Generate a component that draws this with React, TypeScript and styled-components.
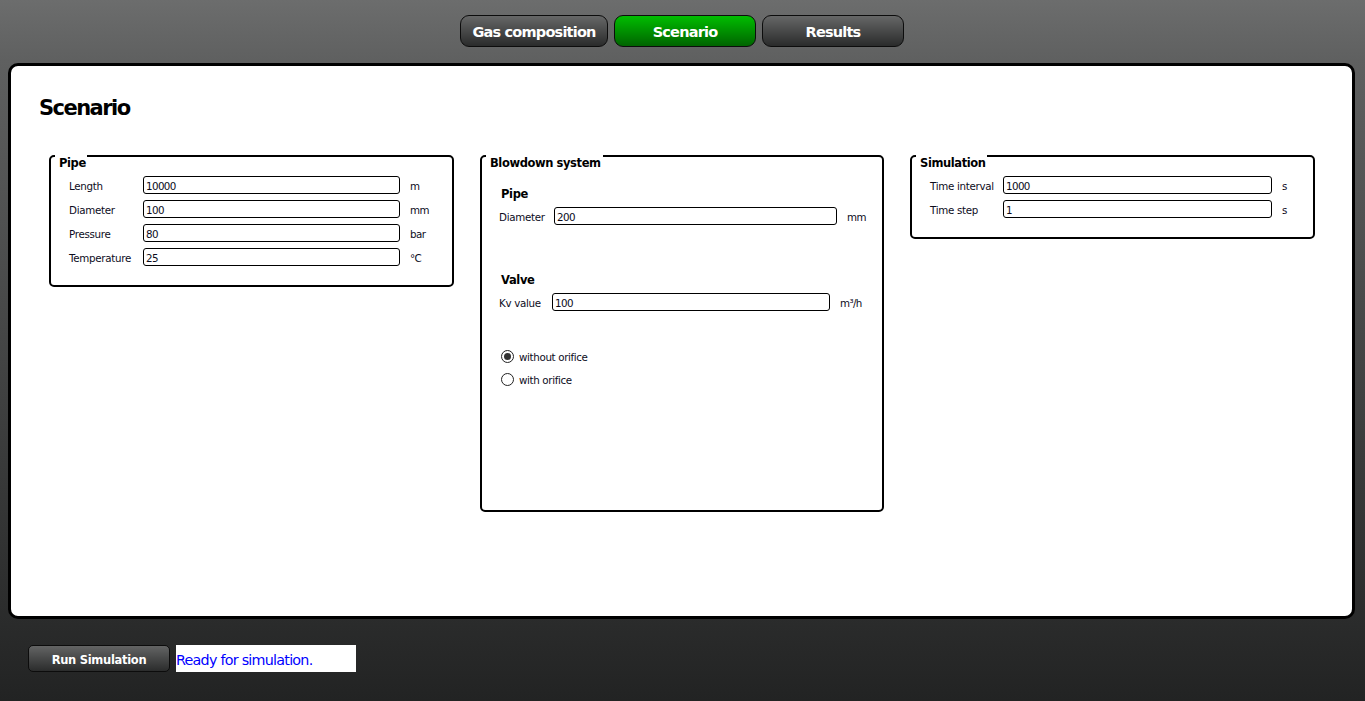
import React from "react";
import styled, { createGlobalStyle } from "styled-components";

const Global = createGlobalStyle`
  html, body {
    margin: 0;
    height: 100%;
    overflow: hidden;
  }
  body {
    font-family: "DejaVu Sans", "Liberation Sans", sans-serif;
    background: linear-gradient(#6c6d6d 0, #5f6060 60px, #2a2b2b 625px, #222323 100%);
  }
`;

const Page = styled.div`
  width: 1365px;
  height: 701px;
  display: flex;
  flex-direction: column;
`;

const TabBar = styled.nav`
  display: flex;
  justify-content: center;
  gap: 6px;
  padding: 15px 1px 16px 0;
`;

const Tab = styled.button<{ $active?: boolean; $w: number }>`
  width: ${(p) => p.$w}px;
  height: 32px;
  padding: 1px 0 0 0;
  border: 1px solid #0c0c0c;
  border-radius: 9px;
  color: #fff;
  font: bold 14.5px "DejaVu Sans", sans-serif;
  letter-spacing: -0.8px;
  background: ${(p) =>
    p.$active
      ? "linear-gradient(#00bd00, #006400)"
      : "linear-gradient(#666767, #2a2b2b)"};
`;

const Panel = styled.main`
  width: 1347px;
  height: 556px;
  box-sizing: border-box;
  margin-left: 8px;
  background: #fff;
  border: 3px solid #000;
  border-radius: 10px;
  padding: 29px 0 0 27px;
`;

const Heading = styled.h1`
  margin: 0 0 34px 1px;
  font-size: 21px;
  line-height: 26px;
  font-weight: bold;
  letter-spacing: -1.55px;
  color: #000;
`;

const Columns = styled.div`
  display: flex;
  align-items: flex-start;
  gap: 26px;
  margin-left: 11px;
`;

const Group = styled.section<{ $w?: number; $h: number }>`
  width: ${(p) => p.$w ?? 405}px;
  height: ${(p) => p.$h}px;
  box-sizing: border-box;
  border: 2px solid #000;
  border-radius: 5px;
  background: #fff;
`;

const Legend = styled.div<{ $w: number }>`
  width: ${(p) => p.$w}px;
  height: 19px;
  box-sizing: border-box;
  margin: -2px 0 0 4px;
  padding: 0 0 0 4px;
  background: #fff;
  font-size: 11.5px;
  line-height: 17px;
  font-weight: bold;
  letter-spacing: -0.4px;
  color: #000;
  position: relative;
`;

const Rows = styled.div`
  display: flex;
  flex-direction: column;
  gap: 6px;
  padding: 2px 0 0 18px;
`;

const Row = styled.div<{ $label: number; $input: number }>`
  display: grid;
  grid-template-columns: ${(p) => p.$label}px ${(p) => p.$input}px auto;
  align-items: center;
  height: 18px;
`;

const Label = styled.label`
  padding-top: 1px;
  font-size: 10.3px;
  letter-spacing: -0.3px;
  color: #0c0c1c;
  white-space: nowrap;
`;

const Field = styled.input`
  width: 100%;
  height: 18px;
  box-sizing: border-box;
  padding: 1px 2px 0 2px;
  border: 1px solid #000;
  border-radius: 3px;
  font: 10.3px "DejaVu Sans", sans-serif;
  letter-spacing: -0.6px;
  color: #0c0c1c;
  background: #fff;
  outline: none;
`;

const Unit = styled.span`
  margin-left: 10px;
  padding-top: 1px;
  font-size: 10.3px;
  letter-spacing: -0.6px;
  color: #0c0c1c;
  white-space: nowrap;
`;

const Inner = styled.div`
  padding: 12px 0 0 17px;
`;

const SubTitle = styled.h3<{ $top?: number }>`
  margin: ${(p) => p.$top ?? 0}px 0 5px 2px;
  font-size: 11.5px;
  line-height: 16px;
  font-weight: bold;
  letter-spacing: -0.35px;
  color: #000;
`;

const RadioGroup = styled.div`
  display: flex;
  flex-direction: column;
  gap: 10px;
  margin: 39px 0 0 2px;
`;

const RadioRow = styled.label`
  display: flex;
  align-items: center;
  gap: 5px;
  height: 13px;
  font-size: 10.3px;
  letter-spacing: -0.35px;
  color: #0c0c1c;
`;

const RadioDot = styled.span<{ $on?: boolean }>`
  width: 13px;
  height: 13px;
  box-sizing: border-box;
  border: 1px solid #222;
  border-radius: 50%;
  display: flex;
  align-items: center;
  justify-content: center;
  &::after {
    content: "";
    width: 7px;
    height: 7px;
    border-radius: 50%;
    background: ${(p) => (p.$on ? "#333" : "transparent")};
  }
`;

const Footer = styled.footer`
  display: flex;
  gap: 6px;
  padding: 26px 0 0 28px;
`;

const RunButton = styled.button`
  width: 142px;
  height: 27px;
  padding: 2px 0 0 0;
  border: 1px solid #0c0c0c;
  border-radius: 5px;
  color: #fff;
  font: bold 11.5px "DejaVu Sans", sans-serif;
  letter-spacing: -0.3px;
  background: linear-gradient(#636464, #2b2c2c);
`;

const Status = styled.div`
  width: 180px;
  height: 27px;
  background: #fff;
  color: #0000ff;
  font-size: 14.3px;
  line-height: 30px;
  letter-spacing: -0.75px;
  white-space: nowrap;
`;

type FieldRow = { label: string; value: string; unit: string };

const pipeRows: FieldRow[] = [
  { label: "Length", value: "10000", unit: "m" },
  { label: "Diameter", value: "100", unit: "mm" },
  { label: "Pressure", value: "80", unit: "bar" },
  { label: "Temperature", value: "25", unit: "°C" },
];

const simRows: FieldRow[] = [
  { label: "Time interval", value: "1000", unit: "s" },
  { label: "Time step", value: "1", unit: "s" },
];

const FieldLine = ({
  row,
  labelW,
  inputW,
}: {
  row: FieldRow;
  labelW: number;
  inputW: number;
}) => (
  <Row $label={labelW} $input={inputW}>
    <Label>{row.label}</Label>
    <Field defaultValue={row.value} />
    <Unit>{row.unit}</Unit>
  </Row>
);

const App = () => {
  return (
    <Page>
      <Global />
      <TabBar>
        <Tab $w={148}>Gas composition</Tab>
        <Tab $w={142} $active>
          Scenario
        </Tab>
        <Tab $w={142}>Results</Tab>
      </TabBar>
      <Panel>
        <Heading>Scenario</Heading>
        <Columns>
          <Group $h={132}>
            <Legend $w={32}>Pipe</Legend>
            <Rows>
              {pipeRows.map((r) => (
                <FieldLine key={r.label} row={r} labelW={74} inputW={257} />
              ))}
            </Rows>
          </Group>
          <Group $w={404} $h={357}>
            <Legend $w={117}>Blowdown system</Legend>
            <Inner>
              <SubTitle>Pipe</SubTitle>
              <FieldLine
                row={{ label: "Diameter", value: "200", unit: "mm" }}
                labelW={55}
                inputW={283}
              />
              <SubTitle $top={47}>Valve</SubTitle>
              <FieldLine
                row={{ label: "Kv value", value: "100", unit: "m³/h" }}
                labelW={53}
                inputW={278}
              />
              <RadioGroup>
                <RadioRow>
                  <RadioDot $on />
                  without orifice
                </RadioRow>
                <RadioRow>
                  <RadioDot />
                  with orifice
                </RadioRow>
              </RadioGroup>
            </Inner>
          </Group>
          <Group $h={84}>
            <Legend $w={71}>Simulation</Legend>
            <Rows>
              {simRows.map((r) => (
                <FieldLine key={r.label} row={r} labelW={73} inputW={269} />
              ))}
            </Rows>
          </Group>
        </Columns>
      </Panel>
      <Footer>
        <RunButton>Run Simulation</RunButton>
        <Status>Ready for simulation.</Status>
      </Footer>
    </Page>
  );
};

export default App;
